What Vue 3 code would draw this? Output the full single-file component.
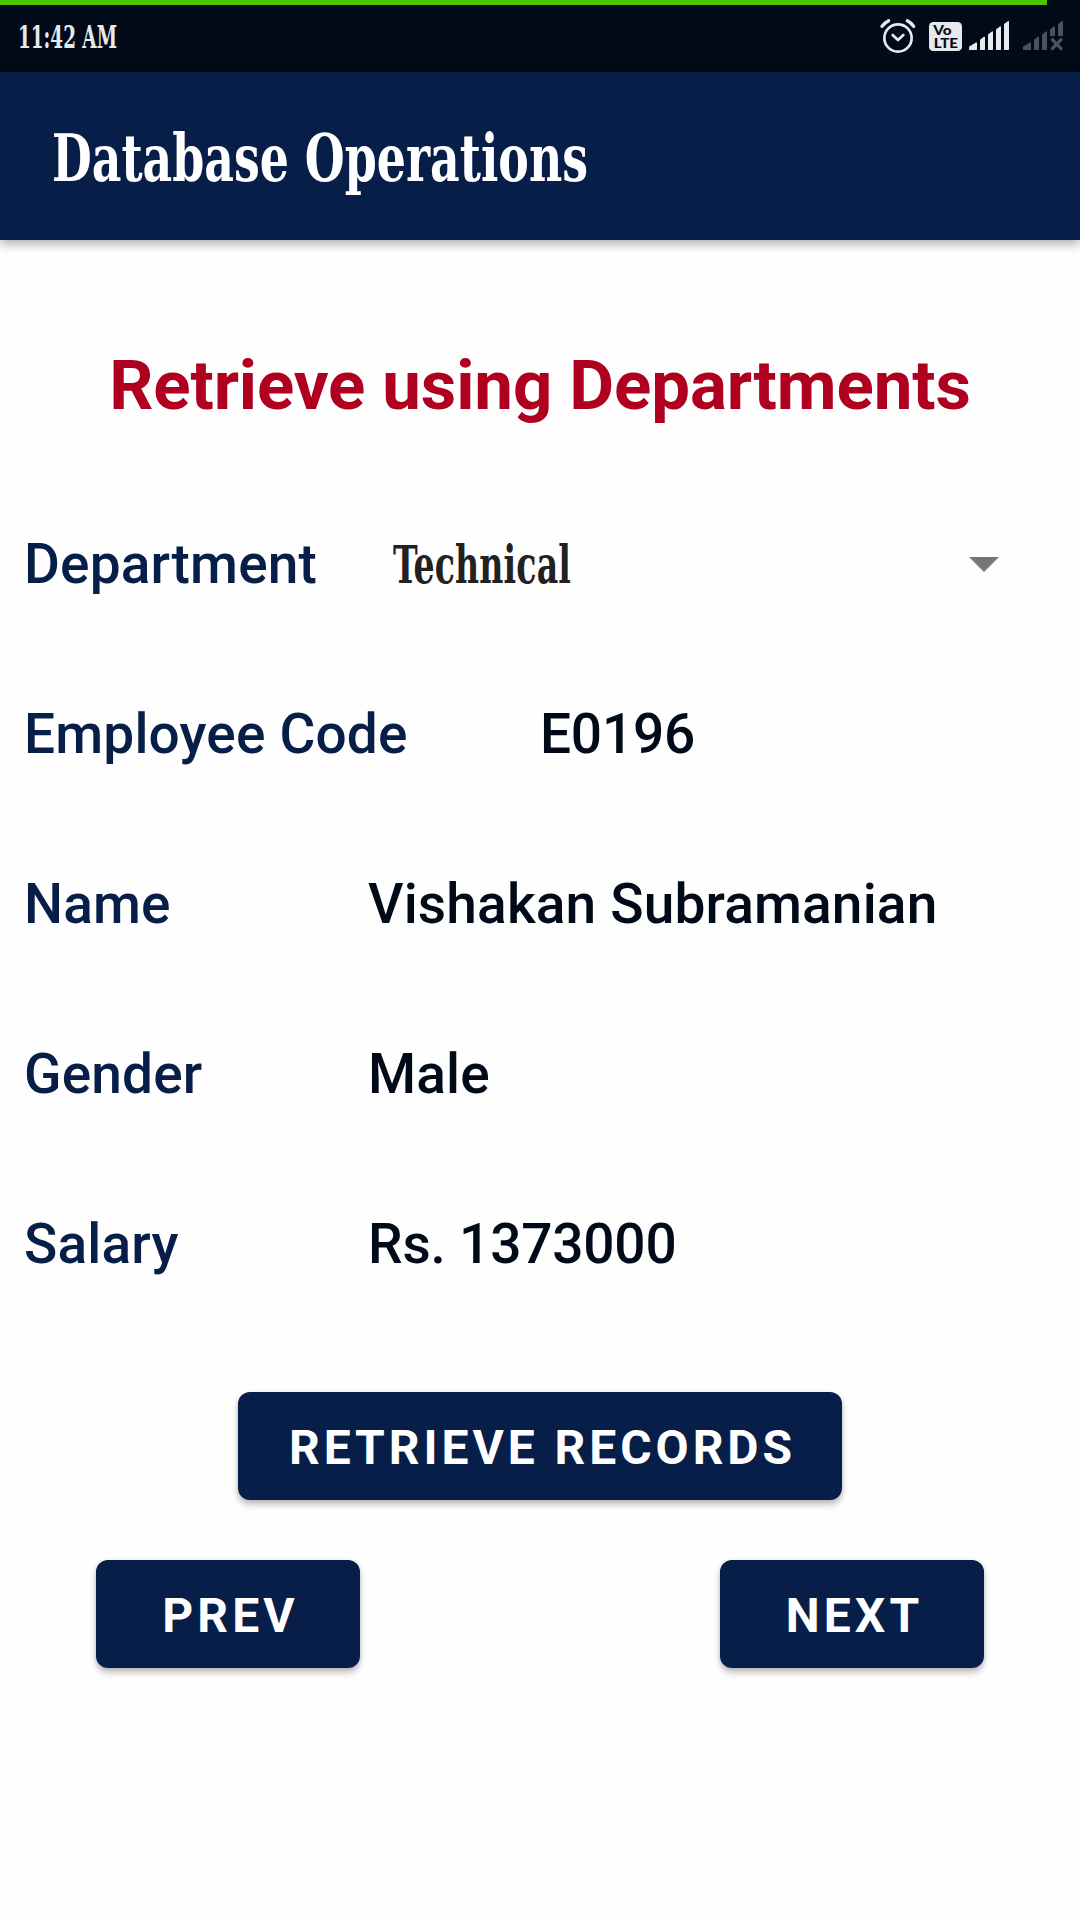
<script setup>
const details = [
  { label: 'Employee Code', value: 'E0196', offset: 540, numeric: true },
  { label: 'Name', value: 'Vishakan Subramanian', offset: 368 },
  { label: 'Gender', value: 'Male', offset: 368 },
  { label: 'Salary', value: 'Rs. 1373000', offset: 368, numeric: true },
]
</script>

<template>
  <div class="screen">
    <div class="battery"><div class="battery-level"></div></div>
    <header class="status">
      <svg class="clock" viewBox="0 0 200 67" width="200" height="67">
        <text class="gothic" x="18" y="43" font-size="31" textLength="99" lengthAdjust="spacingAndGlyphs" fill="#e6e9ed">11:42 AM</text>
      </svg>
      <svg class="indicators" viewBox="0 15 660 201" width="220" height="67">
        <g fill="none" stroke="#e6e9ed" stroke-width="8" stroke-linecap="round" stroke-linejoin="round">
          <circle cx="114" cy="114" r="41" />
          <path d="M98 105L114 120L130 105" />
          <path d="M66 79Q74 68 86 62M142 62Q154 68 161 79" stroke-width="10" />
        </g>
        <rect x="207" y="66" width="99" height="87" rx="13" fill="#e6e9ed" />
        <g fill="#000a18" font-family="Lato, sans-serif" font-weight="900">
          <text x="220" y="104" font-size="40" textLength="55" lengthAdjust="spacingAndGlyphs">Vo</text>
          <text x="221" y="143" font-size="40" textLength="73" lengthAdjust="spacingAndGlyphs">LTE</text>
        </g>
        <g fill="#e6e9ed" stroke="#e6e9ed" stroke-width="4" stroke-linejoin="round">
          <path d="M329 148V141L349 129V148ZM362 148V120L373 112V148ZM386 148V104L397 96V148ZM410 148V89L421 81V148ZM434 148V73L445 65V148Z" />
        </g>
        <g fill="#4b525d" stroke="#4b525d" stroke-width="4" stroke-linejoin="round">
          <path d="M491 148V141L511 129V148ZM524 148V120L535 112V148ZM548 148V104L559 96V148ZM572 106V89L583 81V106ZM596 106V73L607 65V106Z" />
          <path d="M577 119L603 146M603 119L577 146" stroke-width="10" stroke-linecap="round" />
        </g>
      </svg>
    </header>
    <div class="appbar">
      <svg viewBox="0 0 1080 168" width="1080" height="168">
        <text class="gothic" x="52" y="109" font-size="66" textLength="536" lengthAdjust="spacingAndGlyphs" fill="#fff">Database Operations</text>
      </svg>
    </div>
    <main>
      <h1>Retrieve using Departments</h1>
      <div class="row">
        <span class="label dept">Department</span>
        <div class="spinner">
          <svg viewBox="0 0 400 80" width="400" height="80">
            <text class="gothic" x="1" y="59" font-size="53" textLength="178" lengthAdjust="spacingAndGlyphs" fill="#212121">Technical</text>
          </svg>
          <svg class="caret" viewBox="0 0 30 15" width="30" height="15"><path d="M0 0H30L15 15Z" fill="#757575" /></svg>
        </div>
      </div>
      <div v-for="d in details" :key="d.label" class="row">
        <span class="label" :style="{ width: d.offset - 24 + 'px' }">{{ d.label }}</span>
        <span class="value" :class="{ numeric: d.numeric }">{{ d.value }}</span>
      </div>
      <button class="retrieve">RETRIEVE RECORDS</button>
      <div class="nav">
        <button>PREV</button>
        <button>NEXT</button>
      </div>
    </main>
  </div>
</template>

<style>
body {
  margin: 0;
  background: #fefefe;
}
</style>

<style scoped>
.screen {
  width: 1080px;
  height: 1920px;
  overflow: hidden;
  background: #fefefe;
  font-family: Roboto, sans-serif;
}
svg {
  display: block;
  overflow: visible;
}
.gothic {
  font-family: "DejaVu Serif Condensed", "DejaVu Serif", serif;
  font-stretch: condensed;
  font-weight: 700;
}
.battery {
  height: 5px;
  background: #000a18;
}
.battery-level {
  width: 1047px;
  height: 5px;
  background: #49c401;
}
.status {
  display: flex;
  justify-content: space-between;
  height: 67px;
  background: #000a18;
}
.appbar {
  height: 168px;
  background: #061e48;
  box-shadow: 0 4px 10px rgba(0, 0, 0, 0.32);
}
main {
  display: flex;
  flex-direction: column;
}
h1 {
  margin: 105px 0 53px;
  height: 81px;
  line-height: 81px;
  font-size: 69px;
  font-weight: 700;
  letter-spacing: -0.1px;
  text-align: center;
  white-space: nowrap;
  color: #b00020;
}
.row {
  display: flex;
  align-items: center;
  height: 170px;
  padding-left: 24px;
  font-size: 55px;
  line-height: 64px;
  font-weight: 540;
  letter-spacing: 0.17px;
  white-space: nowrap;
}
.label {
  flex: none;
  color: #061e48;
}
.dept {
  width: 368px;
}
.value {
  color: #000a18;
}
.numeric {
  letter-spacing: -0.2px;
}
.spinner {
  flex: 1;
  display: flex;
  align-items: center;
  justify-content: space-between;
  padding-right: 81px;
}
button {
  box-sizing: border-box;
  width: 264px;
  height: 108px;
  padding: 3px 0 0 5px;
  border: 0;
  border-radius: 12px;
  background: #061e48;
  color: #fff;
  font-family: Roboto, sans-serif;
  font-size: 48px;
  font-weight: 680;
  letter-spacing: 4.1px;
  white-space: nowrap;
  box-shadow: 0 5px 6px rgba(0, 0, 0, 0.22), 0 1px 5px rgba(0, 0, 0, 0.12);
}
.retrieve {
  align-self: center;
  width: 604px;
  margin-top: 63px;
  letter-spacing: 3.95px;
}
.nav {
  display: flex;
  justify-content: space-between;
  margin-top: 60px;
  padding: 0 96px;
}
</style>
